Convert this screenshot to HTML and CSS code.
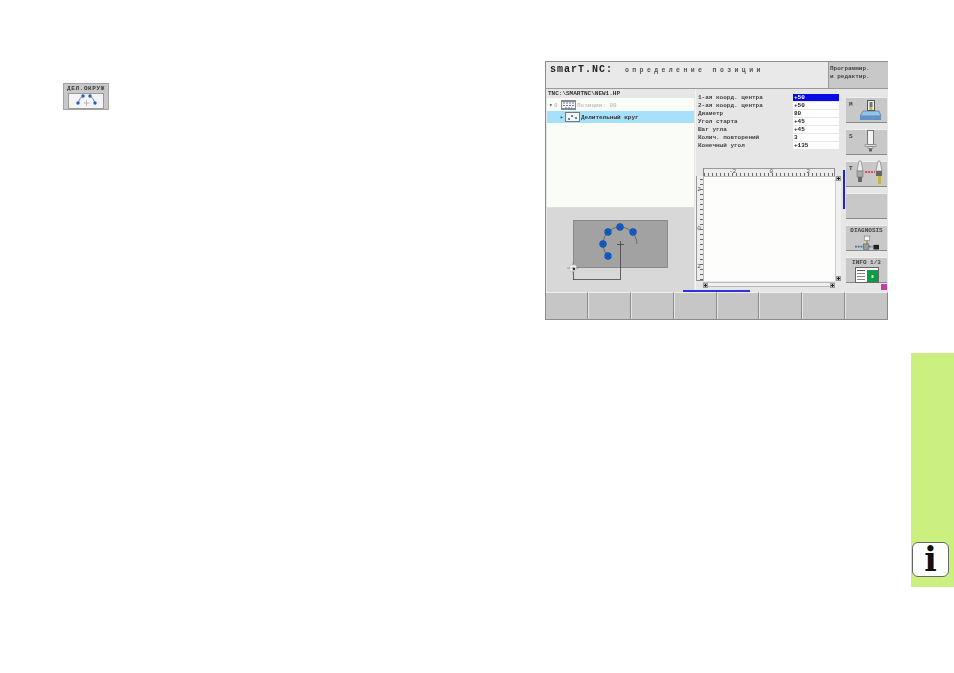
FILE: index.html
```html
<!DOCTYPE html>
<html lang="en">

<head>
    <meta charset="UTF-8">
    <title>smarT.NC</title>
    <link rel="stylesheet" href="styles.css">
</head>

<body>
    <div class="page">
        <div class="sample-key">
            <span>ДЕЛ.ОКРУЖ</span>
            <div class="sample-icon">
                <svg width="34" height="14" viewBox="0 0 34 14">
                    <path d="M9 9 Q11 3 14 2 M21 2 Q24 3 26 9" fill="none" stroke="#667" stroke-width="0.8" />
                    <path d="M17.5 6v6M14.5 9h6" stroke="#bbb" stroke-width="1" />
                    <circle cx="9" cy="9" r="1.7" fill="#1c5fc8" />
                    <circle cx="14" cy="2" r="1.7" fill="#1c5fc8" />
                    <circle cx="21" cy="2" r="1.7" fill="#1c5fc8" />
                    <circle cx="26" cy="9" r="1.7" fill="#1c5fc8" />
                </svg>
            </div>
        </div>

        <div class="screen">
            <div class="header">
                <div class="title">
                    <span class="title-main">smarT.NC:</span>
                    <span class="title-sub">определение позиции</span>
                </div>
                <div class="mode">Программир.<br>и редактир.</div>
            </div>

            <div class="main">
                <div class="left">
                    <div class="path">TNC:\SMARTNC\NEW1.HP</div>
                    <div class="tree">
                        <div class="tree-row muted">
                            <span class="arrow">▾</span><span class="num">0</span>
                            <span class="node node-grid">
                                <svg width="13" height="7" viewBox="0 0 13 7">
                                    <path d="M1 1h11M1 3.5h11M3 6h7" stroke="#5a7fa8" stroke-width="1" stroke-dasharray="2 1" />
                                </svg>
                            </span>
                            <span>Позиции: 00</span>
                        </div>
                        <div class="tree-row active">
                            <span class="arrow">▸</span>
                            <span class="node">
                                <svg width="13" height="7" viewBox="0 0 13 7">
                                    <circle cx="3" cy="5" r="1" fill="#1c5fc8" />
                                    <circle cx="6" cy="2" r="1" fill="#1c5fc8" />
                                    <circle cx="10" cy="4" r="1" fill="#1c5fc8" />
                                </svg>
                            </span>
                            <span>Делительный круг</span>
                        </div>
                    </div>
                    <div class="preview">
                        <svg width="147" height="84" viewBox="547 208 147 84">
                            <rect x="573.5" y="220.5" width="94" height="47" fill="#a2a2a2" stroke="#8a8a8a" />
                            <path d="M608 256 A17 17 0 1 1 637 244" fill="none" stroke="#555" stroke-width="0.7" />
                            <path d="M620.5 241v39M617 244.5h7M573.5 272v8M573 279.5h47" fill="none" stroke="#444" stroke-width="0.8" />
                            <g fill="#0f62d8" stroke="#14408a" stroke-width="0.6">
                                <circle cx="608" cy="232" r="3.4" />
                                <circle cx="620" cy="227" r="3.4" />
                                <circle cx="633" cy="232" r="3.4" />
                                <circle cx="603" cy="244" r="3.4" />
                                <circle cx="608" cy="256" r="3.4" />
                            </g>
                            <path d="M606 230l4 4M610 230l-4 4M618 225l4 4M622 225l-4 4M631 230l4 4M635 230l-4 4M606 254l4 4M610 254l-4 4M601 244h4M603 242v4" stroke="#14408a" stroke-width="0.6" />
                            <circle cx="573" cy="268" r="3.6" fill="#fff" stroke="#aaa" stroke-width="0.6" />
                            <path d="M567 268h12M573 262v12" stroke="#777" stroke-width="0.5" />
                            <circle cx="574" cy="269" r="1.2" fill="#222" />
                        </svg>
                    </div>
                </div>

                <div class="form-panel">
                    <div class="form">
                        <div class="form-row"><span>1-ая коорд. центра</span><span class="field field-active">+50</span></div>
                        <div class="form-row"><span>2-ая коорд. центра</span><span class="field">+50</span></div>
                        <div class="form-row"><span>Диаметр</span><span class="field">80</span></div>
                        <div class="form-row"><span>Угол старта</span><span class="field">+45</span></div>
                        <div class="form-row"><span>Шаг угла</span><span class="field">+45</span></div>
                        <div class="form-row"><span>Колич. повторений</span><span class="field">3</span></div>
                        <div class="form-row"><span>Конечный угол</span><span class="field">+135</span></div>
                    </div>
                    <div class="plot">
                        <div></div>
                        <div class="ruler-h"><span>-2</span><span>0</span><span>2</span></div>
                        <div></div>
                        <div class="ruler-v"><span>2</span><span>0</span><span>2</span></div>
                        <div class="canvas"></div>
                        <div class="scroll-v"><i></i><i></i></div>
                        <div></div>
                        <div class="scroll-h"><i></i><i></i></div>
                    </div>
                </div>

                <div class="side">
                    <div class="side-bar"></div>
                    <div class="side-key">
                        <b>M</b>
                        <svg width="30" height="24" viewBox="0 0 30 24">
                            <rect x="12.5" y="3.5" width="7" height="10" fill="#eee" stroke="#555" />
                            <rect x="14.5" y="5" width="3" height="5" fill="#777" />
                            <rect x="14.5" y="10" width="3" height="3" fill="#c9b441" />
                            <path d="M8 14h16l2 5H5z" fill="#8fc4ec" stroke="#567" stroke-width="0.6" />
                            <rect x="5" y="19" width="21" height="4" fill="#5f93c4" />
                        </svg>
                    </div>
                    <div class="side-key">
                        <b>S</b>
                        <svg width="30" height="24" viewBox="0 0 30 24">
                            <rect x="12.5" y="1.5" width="6" height="14" fill="#f4f4f4" stroke="#777" />
                            <path d="M10 15.5h11v2H10zM13 17.5h5v2h-5z" fill="#ddd" stroke="#777" stroke-width="0.6" />
                            <rect x="14" y="19.5" width="3" height="3" fill="#666" />
                        </svg>
                    </div>
                    <div class="side-key">
                        <b>T</b>
                        <svg width="32" height="25" viewBox="4 0 32 25">
                            <path d="M10 1h2l2 10H8z" fill="#eee" stroke="#777" stroke-width="0.6" />
                            <rect x="8" y="11" width="6" height="6" fill="#aaa" stroke="#666" stroke-width="0.5" />
                            <rect x="9" y="17" width="4" height="5" fill="#666" />
                            <path d="M16 12h10" stroke="#e02828" stroke-dasharray="2 1" stroke-width="1.5" />
                            <path d="M29 1h2l2 10h-6z" fill="#eee" stroke="#777" stroke-width="0.6" />
                            <rect x="27" y="11" width="6" height="5" fill="#666" />
                            <rect x="29" y="16" width="3" height="8" fill="#c9b441" />
                        </svg>
                    </div>
                    <div class="side-key"></div>
                    <div class="side-key side-key-label">
                        <b>DIAGNOSIS</b>
                        <svg width="24" height="16" viewBox="0 0 26 16">
                            <rect x="10" y="0.5" width="6" height="5" fill="#f4f4f4" stroke="#666" stroke-width="0.6" />
                            <rect x="12" y="5.5" width="2" height="4" fill="#b0a030" />
                            <path d="M0 12h19" stroke="#3f6fa8" stroke-width="2" stroke-dasharray="2 1" />
                            <rect x="9" y="9" width="6" height="6" fill="#999" stroke="#555" stroke-width="0.5" />
                            <rect x="20" y="10" width="6" height="5" fill="#222" />
                        </svg>
                    </div>
                    <div class="side-key side-key-label">
                        <b>INFO 1/3</b>
                        <svg width="24" height="16" viewBox="0 0 24 16">
                            <rect x="0.5" y="0.5" width="23" height="15" fill="#fff" stroke="#666" />
                            <rect x="2" y="3" width="8" height="1" fill="#555" />
                            <rect x="2" y="6" width="8" height="1" fill="#888" />
                            <rect x="2" y="9" width="8" height="1" fill="#888" />
                            <rect x="2" y="12" width="8" height="1" fill="#888" />
                            <rect x="12" y="3" width="11" height="12" fill="#0d9a4a" />
                            <rect x="16.5" y="8" width="2" height="3" fill="#cfe8a8" />
                        </svg>
                    </div>
                    <div class="cursor-mark"></div>
                </div>
            </div>

            <div class="softkeys">
                <div class="softkey-row">
                    <div class="softkey"></div>
                    <div class="softkey"></div>
                    <div class="softkey"></div>
                    <div class="softkey"></div>
                    <div class="softkey"></div>
                    <div class="softkey"></div>
                    <div class="softkey"></div>
                    <div class="softkey"></div>
                </div>
                <div class="softkey-bar"></div>
            </div>
        </div>

        <div class="tab">
            <div class="info-icon">i</div>
        </div>
    </div>
</body>

</html>
```

FILE: styles.css
```css
body,
html {
    margin: 0;
    padding: 0;
    height: 100%;
    overflow: hidden;
    background-color: white;
}

.page {
    display: flex;
    height: 673px;
    width: 954px;
    font-family: "Liberation Mono", "DejaVu Sans Mono", monospace;
    font-size: 6px;
    color: #333;
}

/* small softkey shown next to the text */
.sample-key {
    width: 46px;
    height: 27px;
    margin: 83px 0 0 63px;
    padding-top: 1px;
    box-sizing: border-box;
    background-color: #c8c8c8;
    border: 1px solid #a4a4a4;
    display: flex;
    flex-direction: column;
    align-items: center;
    font-weight: bold;
    line-height: 8px;
    letter-spacing: 0.6px;
    filter: blur(0.3px);
}

.sample-icon {
    display: flex;
    justify-content: center;
    width: 36px;
    height: 16px;
    background-color: #f4f4f6;
    border: 1px solid #9a9a9a;
    box-sizing: border-box;
}

.screen {
    width: 343px;
    height: 259px;
    margin: 61px 0 0 436px;
    background-color: #e6e6e6;
    border-left: 1px solid #8c8c8c;
    box-sizing: border-box;
    display: flex;
    flex-direction: column;
    filter: blur(0.3px);
}

.header {
    height: 28px;
    flex: none;
    display: flex;
    border-top: 1px solid #8c8c8c;
    border-bottom: 1px solid #9a9a9a;
    box-sizing: border-box;
}

.title {
    flex: 1;
    padding: 3px 0 0 4px;
    display: flex;
    align-items: flex-start;
    gap: 12px;
    background-color: #e9e9e9;
}

.title-main {
    font-size: 10px;
    line-height: 10px;
    font-weight: bold;
    letter-spacing: 1px;
    color: #222;
}

.title-sub {
    font-size: 6.5px;
    line-height: 11px;
    letter-spacing: 3.4px;
    font-weight: bold;
    color: #555;
}

.mode {
    width: 60px;
    flex: none;
    padding: 3px 0 0 1px;
    box-sizing: border-box;
    background-color: #c8c8c8;
    border-left: 1px solid #999;
    line-height: 8px;
    font-weight: bold;
    color: #444;
}

.main {
    height: 203px;
    flex: none;
    display: flex;
}

.left {
    width: 148px;
    flex: none;
    display: flex;
    flex-direction: column;
    padding-left: 1px;
    box-sizing: border-box;
}

.path {
    height: 9px;
    line-height: 9px;
    padding-left: 1px;
    font-weight: bold;
    flex: none;
}

.tree {
    height: 110px;
    flex: none;
    background-color: #fafdf7;
    padding-top: 1px;
    box-sizing: border-box;
    border-bottom: 1px solid #ddd;
}

.tree-row {
    display: flex;
    align-items: center;
    height: 12px;
    gap: 1px;
    font-weight: bold;
}

.tree-row.muted {
    color: #c4c4c4;
    padding-left: 2px;
}

.tree-row.active {
    background-color: #a6e0fb;
    padding-left: 13px;
}

.arrow {
    width: 4px;
    color: #444;
}

.num {
    width: 6px;
}

.node {
    display: flex;
    align-items: center;
    justify-content: center;
    width: 15px;
    height: 10px;
    box-sizing: border-box;
    background-color: #f4f6fa;
    border: 1px solid #777;
}

.node-grid {
    border-width: 2px 1px;
    border-color: #8a8a8a;
}

.preview {
    flex: 1;
    background-color: #d8d8d8;
}

.preview svg {
    display: block;
}

.form-panel {
    width: 148px;
    flex: none;
    margin-left: 1px;
    display: flex;
    flex-direction: column;
    border-left: 1px solid #f4f4f4;
    box-sizing: border-box;
}

.form {
    height: 79px;
    flex: none;
    padding: 5px 4px 0 2px;
    box-sizing: border-box;
}

.form-row {
    display: flex;
    justify-content: space-between;
    height: 8px;
    line-height: 8px;
    font-weight: bold;
    color: #444;
}

.field {
    width: 46px;
    height: 7px;
    line-height: 7px;
    padding-left: 1px;
    box-sizing: border-box;
    background-color: #fdfdfd;
    color: #222;
}

.field-active {
    background-color: #0a0ae6;
    color: white;
}

.plot {
    display: grid;
    grid-template-columns: 7px 132px 6px;
    grid-template-rows: 8px 105px 6px;
}

.ruler-h {
    display: flex;
    justify-content: space-between;
    padding: 0 24px 0 25px;
    line-height: 6px;
    color: #555;
    background: repeating-linear-gradient(90deg, #666 0 1px, transparent 1px 4px) bottom / 100% 3px no-repeat #ededed;
    border-top: 1px solid #999;
    border-left: 1px solid #888;
    border-right: 1px solid #888;
    box-sizing: border-box;
}

.ruler-v {
    display: flex;
    flex-direction: column;
    justify-content: space-between;
    align-items: center;
    padding: 10px 2px 10px 0;
    color: #555;
    background: repeating-linear-gradient(0deg, #666 0 1px, transparent 1px 5px) right / 3px 100% no-repeat #ededed;
    border-left: 1px solid #999;
    border-bottom: 1px solid #888;
    box-sizing: border-box;
}

.canvas {
    background-color: #fdfefb;
    border-left: 1px solid #bbb;
    border-top: 1px solid #bbb;
}

.scroll-v {
    display: flex;
    flex-direction: column;
    justify-content: space-between;
    background-color: #efefef;
    border-left: 1px solid #ccc;
}

.scroll-h {
    display: flex;
    justify-content: space-between;
    margin-top: 1px;
    background-color: #efefef;
    border-top: 1px solid #bbb;
    border-bottom: 1px solid #bbb;
}

.scroll-v i,
.scroll-h i {
    display: block;
    width: 5px;
    height: 5px;
    background: radial-gradient(#222 1px, #e8e8e8 1.5px);
    border: 1px solid #999;
    box-sizing: border-box;
}

.side {
    flex: 1;
    display: flex;
    flex-direction: column;
    align-items: flex-end;
    gap: 6px;
    padding: 8px 1px 0 0;
    position: relative;
}

.side-bar {
    position: absolute;
    left: 0;
    top: 81px;
    width: 2px;
    height: 39px;
    background-color: #2020e0;
}

.side-key {
    width: 41px;
    height: 26px;
    flex: none;
    box-sizing: border-box;
    background-color: #c8c8c8;
    border-top: 1px solid #efefef;
    border-bottom: 1px solid #8a8a8a;
    display: flex;
    align-items: flex-end;
    justify-content: space-between;
    padding: 0 2px 1px 3px;
    font-weight: bold;
    line-height: 8px;
    color: #444;
}

.side-key b {
    align-self: flex-start;
    margin-top: 3px;
}

.side-key-label {
    flex-direction: column;
    align-items: center;
    justify-content: flex-start;
    padding: 1px 0 0;
}

.side-key-label b {
    align-self: center;
    margin-top: 0;
}

.side-key-label svg {
    flex: none;
}

.cursor-mark {
    position: absolute;
    right: 1px;
    bottom: 2px;
    width: 6px;
    height: 6px;
    background-color: #c040a0;
}

.softkeys {
    flex: 1;
    position: relative;
    display: flex;
}

.softkey-row {
    flex: 1;
    display: grid;
    grid-template-columns: repeat(8, 1fr);
    gap: 1px;
    border-bottom: 1px solid #8c8c8c;
}

.softkey {
    background-color: #c6c6c6;
    border-top: 1px solid #efefef;
    border-right: 1px solid #8a8a8a;
}

.softkey-bar {
    position: absolute;
    left: 137px;
    top: -2px;
    width: 67px;
    height: 2px;
    background-color: #3030e0;
}

.tab {
    width: 43px;
    height: 234px;
    margin: 353px 0 0 auto;
    flex: none;
    background-color: #ccf080;
    display: flex;
    align-items: flex-end;
    padding: 0 0 10px 1px;
    box-sizing: border-box;
}

.info-icon {
    width: 37px;
    height: 35px;
    box-sizing: border-box;
    background-color: white;
    border: 1px solid #666;
    border-radius: 6px;
    font-family: "DejaVu Serif", serif;
    font-weight: bold;
    font-size: 33px;
    line-height: 33px;
    text-align: center;
    color: #111;
}
```
